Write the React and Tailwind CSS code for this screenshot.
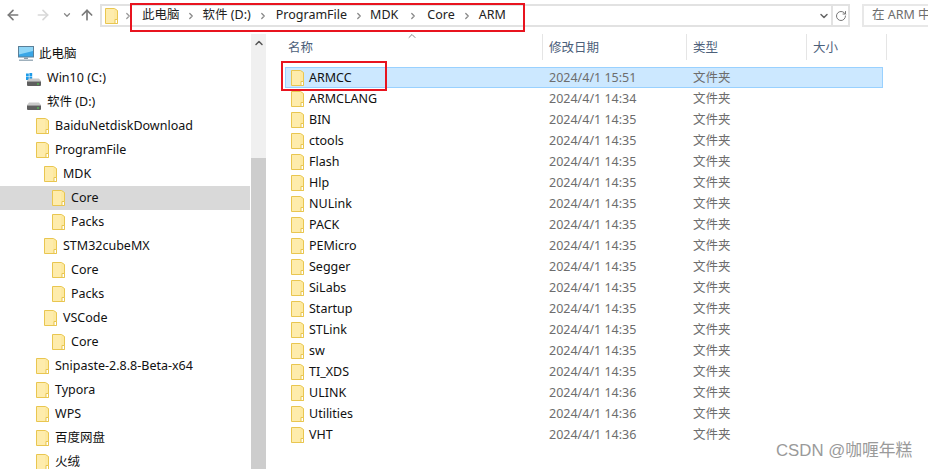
import { ArrowLeft, ArrowRight, ArrowUp, ChevronDown, ChevronRight, ChevronUp, RotateCw } from 'lucide-react';

const font = "font-['Noto_Sans','Noto_Sans_CJK_SC',sans-serif]";

const files = [
  ['ARMCC', '2024/4/1 15:51'],
  ['ARMCLANG', '2024/4/1 14:34'],
  ['BIN', '2024/4/1 14:35'],
  ['ctools', '2024/4/1 14:35'],
  ['Flash', '2024/4/1 14:35'],
  ['Hlp', '2024/4/1 14:35'],
  ['NULink', '2024/4/1 14:35'],
  ['PACK', '2024/4/1 14:35'],
  ['PEMicro', '2024/4/1 14:35'],
  ['Segger', '2024/4/1 14:35'],
  ['SiLabs', '2024/4/1 14:35'],
  ['Startup', '2024/4/1 14:35'],
  ['STLink', '2024/4/1 14:35'],
  ['sw', '2024/4/1 14:35'],
  ['TI_XDS', '2024/4/1 14:35'],
  ['ULINK', '2024/4/1 14:36'],
  ['Utilities', '2024/4/1 14:36'],
  ['VHT', '2024/4/1 14:36'],
];

const tree = [
  ['BaiduNetdiskDownload', 'pl-[36px]'],
  ['ProgramFile', 'pl-[36px]'],
  ['MDK', 'pl-[44px]'],
  ['Core', 'pl-[52px]', true],
  ['Packs', 'pl-[52px]'],
  ['STM32cubeMX', 'pl-[44px]'],
  ['Core', 'pl-[52px]'],
  ['Packs', 'pl-[52px]'],
  ['VSCode', 'pl-[44px]'],
  ['Core', 'pl-[52px]'],
  ['Snipaste-2.8.8-Beta-x64', 'pl-[36px]'],
  ['Typora', 'pl-[36px]'],
  ['WPS', 'pl-[36px]'],
  ['百度网盘', 'pl-[36px]'],
  ['火绒', 'pl-[36px]'],
];

function Folder({ className }) {
  return (
    <svg viewBox="0 0 13 16" className={className}>
      <path d="M.5.5h9l3 2v13H.5z" fill="#fde9a0" stroke="#e9c650" />
      <path d="M1 1h8v14H1z" fill="#fff0b8" opacity="0.5" />
      <path d="M10 15.500v-4h2.500v4z" fill="#fff" stroke="#e9c650" />
    </svg>
  );
}

function Drive({ win }) {
  return (
    <svg viewBox="0 0 16 16" className="w-[16px] h-[16px] shrink-0">
      {win && <path d="M0 3.500h2.800v3H0zM3.400 3h2.800v3.500H3.400zM0 7h2.800v3H0zM3.400 7h2.800v3H3.400z" fill="#1e9be8" />}
      <path d="M3 8.500h10l2 2.500H1z" fill="#c9c9c9" />
      <rect x="1" y="11" width="14" height="5" rx="1" fill="#5f5f5f" />
      <rect x="1" y="11" width="14" height="1" fill="#9a9a9a" />
      <rect x="11" y="13.500" width="2" height="1" fill="#4be04b" />
    </svg>
  );
}

function Monitor() {
  return (
    <svg viewBox="0 0 16 16" className="w-[16px] h-[16px] shrink-0">
      <rect x="0.500" y="0.500" width="15" height="10.500" fill="#39a6e6" stroke="#5a7f98" />
      <path d="M1 1h14v4L1 8.500z" fill="#8fd6f7" />
      <path d="M6 11.500h4V13H6z" fill="#8a9aa6" />
      <path d="M1 13.500h14V15H1z" fill="#9fb0bc" />
    </svg>
  );
}

function Sidebar() {
  return (
    <div className="w-[250px] shrink-0 pt-[8px] text-[12.5px] text-[#111]">
      <div className="h-[24px] flex items-center pl-[18px] gap-[5px]">
        <Monitor />
        <span>此电脑</span>
      </div>
      <div className="h-[24px] flex items-center pl-[26px] gap-[5px]">
        <Drive win />
        <span>Win10 (C:)</span>
      </div>
      <div className="h-[24px] flex items-center pl-[26px] gap-[5px]">
        <Drive />
        <span>软件 (D:)</span>
      </div>
      {tree.map(([name, indent, active], i) => (
        <div key={i} className={`h-[24px] flex items-center gap-[6px] ${indent} ${active ? 'bg-[#d9d9d9]' : ''}`}>
          <Folder className="w-[13px] h-[16px] shrink-0" />
          <span>{name}</span>
        </div>
      ))}
    </div>
  );
}

function Scrollbar() {
  return (
    <div className="w-[15px] ml-[1px] shrink-0 bg-[#f0f0f0] flex flex-col">
      <div className="h-[124px] shrink-0 pt-[3px] flex justify-center">
        <ChevronUp size={12} strokeWidth={3} className="text-[#555]" />
      </div>
      <div className="flex-1 bg-[#cdcdcd]" />
    </div>
  );
}

function Header() {
  return (
    <div className="h-[26px] flex items-center text-[12.5px] text-[#4c607a] relative">
      <ChevronUp size={12} className="absolute left-[140px] -top-[4px] text-[#888]" />
      <div className="w-[277px] h-full pl-[22px] pt-[2px] border-r border-[#e5e5e5] flex items-center">名称</div>
      <div className="w-[144px] h-full pl-[6px] pt-[2px] border-r border-[#e5e5e5] flex items-center">修改日期</div>
      <div className="w-[120px] h-full pl-[6px] pt-[2px] border-r border-[#e5e5e5] flex items-center">类型</div>
      <div className="w-[80px] h-full pl-[6px] pt-[2px] border-r border-[#e5e5e5] flex items-center">大小</div>
    </div>
  );
}

function FileRow({ name, date, selected }) {
  return (
    <div
      className={`h-[21px] w-[598px] ml-[19px] flex items-center border ${
        selected ? 'bg-[#cce8ff] border-[#99d1ff]' : 'border-transparent'
      }`}
    >
      <Folder className="w-[13px] h-[16px] ml-[5px] shrink-0" />
      <span className="w-[245px] pl-[5px] pt-[2px] shrink-0 text-[12.5px] text-[#111]">{name}</span>
      <span className="w-[144px] pt-[2px] shrink-0 text-[12.5px] text-[#6d6d6d]">{date}</span>
      <span className="pt-[2px] text-[12.5px] text-[#6d6d6d]">文件夹</span>
    </div>
  );
}

function Crumb({ className }) {
  return <ChevronRight size={10} strokeWidth={3} className={`text-[#888] shrink-0 ${className}`} />;
}

function TopBar() {
  return (
    <div className="h-[34px] shrink-0 flex items-start text-[#777]">
      <div className="w-[100px] h-[30px] pl-[5px] flex items-center shrink-0">
        <ArrowLeft size={16} strokeWidth={2.5} className="text-[#7a7a7a]" />
        <ArrowRight size={16} strokeWidth={2.5} className="ml-[14px] text-[#d8d8d8]" />
        <ChevronDown size={10} strokeWidth={3} className="ml-[11px] text-[#888]" />
        <ArrowUp size={16} strokeWidth={2.5} className="ml-[7px] text-[#7a7a7a]" />
      </div>
      <div className="w-[750px] h-[23px] mt-[4px] border-2 border-[#e2e2e2] flex items-center shrink-0">
        <Folder className="w-[13px] h-[16px] ml-[3px] shrink-0" />
        <ChevronRight size={10} strokeWidth={3} className="ml-[5px] text-[#999]" />
        <div className="flex items-center ml-[9px] text-[12.5px] text-[#222]">
          <span>此电脑</span>
          <Crumb className="mx-[6.5px]" />
          <span>软件 (D:)</span>
          <Crumb className="mx-[7.5px]" />
          <span>ProgramFile</span>
          <Crumb className="mx-[6.5px]" />
          <span>MDK</span>
          <Crumb className="mx-[9.5px]" />
          <span>Core</span>
          <Crumb className="mx-[7px]" />
          <span>ARM</span>
        </div>
        <div className="ml-auto flex items-center h-full">
          <ChevronDown size={12} strokeWidth={3} className="text-[#666] mr-[1px]" />
          <div className="h-full w-[17px] border-l-2 border-[#e2e2e2] flex items-center justify-center">
            <RotateCw size={12} strokeWidth={2} className="text-[#777]" />
          </div>
        </div>
      </div>
      <div className="ml-[12px] flex-1 h-[23px] mt-[4px] border-2 border-r-0 border-[#e8e8e8] pl-[8px] text-[12.5px] text-[#6d6d6d] flex items-center whitespace-nowrap overflow-hidden">
        在 ARM 中
      </div>
    </div>
  );
}

export default function App() {
  return (
    <div className={`w-[928px] h-[469px] bg-white relative overflow-hidden flex flex-col ${font}`}>
      <TopBar />
      <div className="flex flex-1 min-h-0">
        <Sidebar />
        <Scrollbar />
        <div className="flex-1 min-w-0">
          <Header />
          <div className="pt-[7px]">
            {files.map(([name, date], i) => (
              <FileRow key={name} name={name} date={date} selected={i === 0} />
            ))}
          </div>
        </div>
      </div>
      <div className="absolute left-[130px] top-[3px] w-[395px] h-[29px] border-[2px] border-[#e8141f]" />
      <div className="absolute left-[281px] top-[61px] w-[106px] h-[30px] border-[2px] border-[#e8141f]" />
      <div className="absolute left-[776px] top-[440px] text-[16.8px] leading-[22px] text-[#9a9a9a] font-['Liberation_Sans','Noto_Sans_CJK_SC',sans-serif] whitespace-nowrap">CSDN @咖喱年糕</div>
    </div>
  );
}
